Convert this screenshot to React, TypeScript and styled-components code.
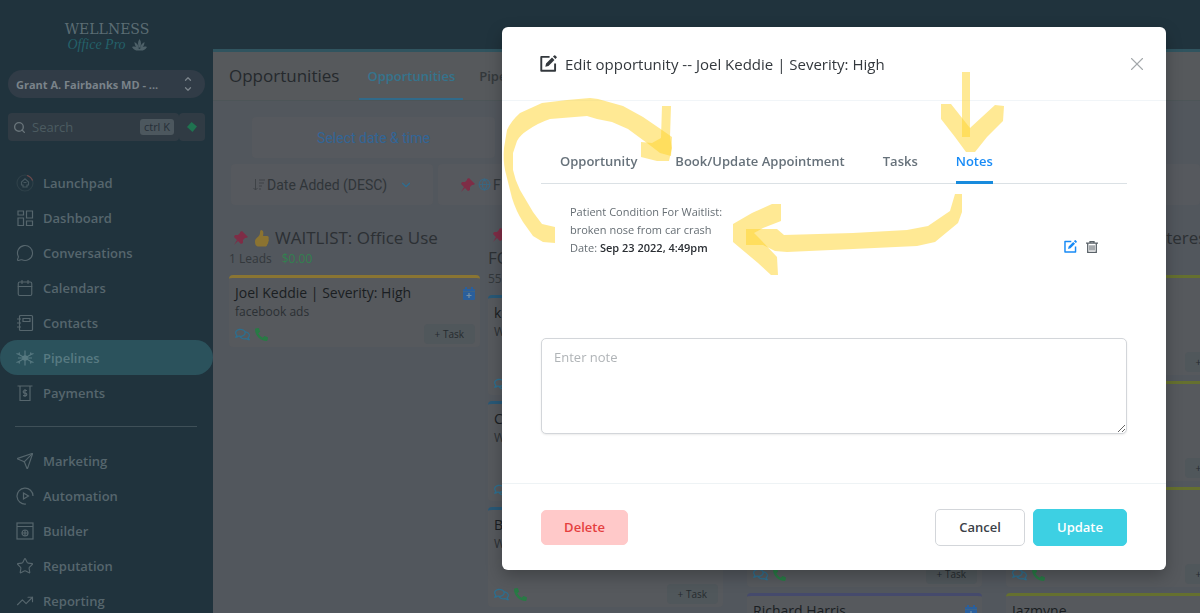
import React from 'react';
import styled, { createGlobalStyle } from 'styled-components';
import { MessageCircle, Send, Star, TrendingUp, Calendar, X, ChevronDown, ChevronUp, Search, Globe } from 'lucide-react';
import { FaPhoneAlt, FaRegComments } from 'react-icons/fa';

const sans = "'Open Sans', 'Noto Sans', sans-serif";

const Global = createGlobalStyle`
  * { box-sizing: border-box; }
  body { margin: 0; font-family: ${sans}; background: #20333d; overflow: hidden; }
  button, input, textarea { font-family: inherit; }
  h1, h2, h3, p, ul { margin: 0; padding: 0; }
  a { text-decoration: none; color: inherit; }
`;

const Shell = styled.div`
  display: flex;
  height: 100vh;
  overflow: hidden;
`;

/* ---------- sidebar ---------- */

const Sidebar = styled.aside`
  flex: none;
  width: 213px;
  display: flex;
  flex-direction: column;
  color: #56666d;
  background: #20333d;
  & > * { flex: none; }
`;

const Logo = styled.div`
  height: 70px;
  padding: 21px 0 0 1px;
  display: flex;
  flex-direction: column;
  align-items: center;
`;

const LogoName = styled.span`
  font: 14px/16px 'DejaVu Serif', serif;
  color: #5c6d74;
`;

const LogoScript = styled.span`
  display: flex;
  align-items: center;
  gap: 6px;
  font: italic 14px/16px 'Liberation Serif', serif;
  color: #24616a;
`;

const Account = styled.button`
  display: flex;
  align-items: center;
  justify-content: space-between;
  height: 28px;
  margin: 0 8px;
  padding: 0 12px 0 8px;
  border: 0;
  border-radius: 14px;
  background: #313c47;
  color: #7a838a;
  font-size: 11px;
  font-weight: 700;
`;

const Chevrons = styled.span`
  display: flex;
  flex-direction: column;
`;

const SearchRow = styled.div`
  display: flex;
  height: 28px;
  margin: 15px 8px 24px;
`;

const SearchBox = styled.label`
  flex: 1;
  min-width: 0;
  display: flex;
  align-items: center;
  gap: 6px;
  padding: 0 5px;
  border-radius: 4px;
  background: #303b44;
  color: #69747a;
`;

const SearchInput = styled.input`
  flex: 1;
  min-width: 0;
  padding: 0;
  border: 0;
  background: none;
  font-size: 13px;
  color: #69747a;
  &::placeholder { color: #4c5b61; opacity: 1; }
`;

const Kbd = styled.kbd`
  padding: 0 4px;
  border-radius: 3px;
  background: #4c575e;
  color: #262f38;
  font: 500 11px/16px ${sans};
`;

const Quick = styled.button`
  width: 26px;
  padding: 0;
  border: 0;
  border-radius: 4px;
  background: #303b44;
  display: grid;
  place-items: center;
`;

const NavList = styled.nav`
  display: flex;
  flex-direction: column;
`;

const NavItem = styled.a<{ $active?: boolean }>`
  display: flex;
  align-items: center;
  gap: 9px;
  height: 35px;
  flex: none;
  padding-left: 16px;
  border-radius: 18px;
  font-size: 13px;
  font-weight: 600;
  background: ${(p) => (p.$active ? '#2b525c' : 'transparent')};
  color: ${(p) => (p.$active ? '#587a82' : '#56666d')};
`;

const Divider = styled.hr`
  width: 182px;
  height: 1px;
  margin: 16px 15px;
  border: 0;
  background: #3f5058;
`;

/* ---------- main area behind the dialog ---------- */

const Main = styled.main`
  flex: 1;
  min-width: 0;
  margin-top: 49px;
  border-top: 3px solid #30545f;
  background: #52575d;
  overflow: hidden;
`;

const TopBar = styled.header`
  display: flex;
  align-items: center;
  gap: 20px;
  height: 49px;
  padding-left: 16px;
  border-bottom: 1px solid #4d5558;
  background: #56595c;
`;

const PageTitle = styled.h1`
  font-size: 17px;
  line-height: 24px;
  font-weight: 500;
  color: #25292d;
`;

const TopTabs = styled.nav`
  display: flex;
  gap: 8px;
  height: 48px;
`;

const TopTab = styled.a<{ $active?: boolean }>`
  display: flex;
  align-items: center;
  padding: 2px 8px 0;
  font-size: 13px;
  font-weight: 600;
  border-bottom: 2px solid ${(p) => (p.$active ? '#306a8a' : 'transparent')};
  color: ${(p) => (p.$active ? '#35748d' : '#33383b')};
`;

const Filters = styled.div`
  display: flex;
  flex-direction: column;
  gap: 6px;
  padding: 16px 0 13px 18px;
`;

const DateButton = styled.button`
  width: 243px;
  height: 41px;
  margin-left: 21px;
  border: 0;
  border-radius: 4px;
  background: #56595e;
  color: #326596;
  font: 14px/20px Roboto, sans-serif;
`;

const FilterRow = styled.div`
  display: flex;
  gap: 5px;
`;

const FilterButton = styled.button<{ $grow?: boolean }>`
  display: flex;
  align-items: center;
  flex: ${(p) => (p.$grow ? '1 0 auto' : '0 0 202px')};
  height: 41px;
  padding: 0 0 0 22px;
  border: 0;
  border-radius: 4px;
  background: #56595e;
  color: #303539;
  font: 14px/20px Roboto, sans-serif;
  white-space: nowrap;
  & > svg:last-child { margin-left: 12px; }
`;

const FilterText = styled.span`
  display: flex;
  margin-left: 2px;
`;

const Board = styled.div`
  display: flex;
  padding-left: 16px;
`;

const Column = styled.section<{ $full?: boolean }>`
  flex: 0 0 259px;
  padding: 9px ${(p) => (p.$full ? 8 : 24)}px 0 0;
`;

const ColumnTitle = styled.h2`
  display: flex;
  align-items: center;
  flex-wrap: wrap;
  column-gap: 5px;
  min-height: 21px;
  padding-left: 4px;
  font-size: 17px;
  line-height: 21px;
  font-weight: 400;
  color: #2c3034;
  white-space: nowrap;
`;

const TitleBreak = styled.span`
  flex-basis: 100%;
  padding-top: 4px;
  margin-left: -4px;
`;

const Counts = styled.p`
  display: flex;
  gap: 10px;
  min-height: 22px;
  padding: 1px 0;
  font-size: 12px;
  line-height: 20px;
  color: #33383c;
`;

const Money = styled.span`
  color: #32804f;
`;

const Cards = styled.div`
  display: flex;
  flex-direction: column;
  gap: 6px;
  padding-top: 5px;
`;

const CardBox = styled.article<{ $line: string; $short?: boolean }>`
  display: flex;
  flex-direction: column;
  height: ${(p) => (p.$short ? 72 : 100)}px;
  padding: 5px 5px 3px 6px;
  border-top: 3px solid ${(p) => p.$line};
  border-radius: 4px;
  background: #56595d;
`;

const CardHead = styled.div`
  display: flex;
  justify-content: space-between;
  align-items: center;
`;

const CardName = styled.h3`
  font-size: 14px;
  line-height: 20px;
  font-weight: 500;
  color: #1a1e22;
`;

const CardSource = styled.p`
  font-size: 12px;
  line-height: 18px;
  color: #2b3034;
`;

const CardFoot = styled.div`
  display: flex;
  align-items: center;
  gap: 5px;
  margin-top: auto;
  color: #2d6f8f;
`;

const TaskButton = styled.button`
  margin-left: auto;
  padding: 0 11px;
  border: 0;
  border-radius: 4px;
  background: #50575b;
  color: #262b2f;
  font-size: 10px;
  line-height: 20px;
  font-weight: 500;
  white-space: nowrap;
`;

/* ---------- dialog ---------- */

const Overlay = styled.div`
  position: fixed;
  inset: 0;
  display: flex;
  justify-content: flex-end;
  align-items: flex-start;
  padding: 27px 34px;
`;

const Dialog = styled.div`
  position: relative;
  width: 100%;
  max-width: 664px;
  border-radius: 6px;
  background: #fff;
  box-shadow: 0 6px 16px rgba(0, 0, 0, 0.25);
`;

const DialogHead = styled.div`
  display: flex;
  align-items: center;
  gap: 8px;
  height: 74px;
  padding: 0 18px 0 38px;
  border-bottom: 1px solid #f1f5f8;
  color: #33383d;
`;

const DialogTitle = styled.h2`
  flex: 1;
  font-size: 15px;
  line-height: 24px;
  font-weight: 400;
`;

const IconButton = styled.button<{ $tone: string }>`
  display: grid;
  place-items: center;
  padding: 0;
  border: 0;
  background: none;
  color: ${(p) => p.$tone};
`;

const DialogBody = styled.div`
  padding: 38px 39px 49px;
`;

const Tabs = styled.div`
  display: flex;
  gap: 38px;
  padding-left: 19px;
  border-bottom: 1px solid #dbe1e5;
`;

const Tab = styled.button<{ $active?: boolean }>`
  height: 45px;
  margin-bottom: -1px;
  padding: 2px 0 0;
  border: 0;
  border-bottom: 3px solid ${(p) => (p.$active ? '#188bdd' : 'transparent')};
  background: none;
  color: ${(p) => (p.$active ? '#188bf6' : '#66717a')};
  font-size: 13px;
  font-weight: 600;
  white-space: nowrap;
`;

const NoteRow = styled.div`
  display: flex;
  justify-content: space-between;
  align-items: flex-end;
  padding: 19px 29px 0;
  min-height: 73px;
`;

const NoteText = styled.p`
  font-size: 11px;
  line-height: 18px;
  color: #666e74;
  strong { font-weight: 600; color: #2a2e33; }
`;

const NoteActions = styled.div`
  display: flex;
  gap: 9px;
  padding-bottom: 4px;
`;

const NoteInput = styled.textarea`
  display: block;
  width: 100%;
  height: 96px;
  margin-top: 81px;
  padding: 8px 12px;
  border: 1px solid #d3d6da;
  border-radius: 5px;
  box-shadow: 0 1px 2px rgba(0, 0, 0, 0.08);
  font-size: 13px;
  line-height: 20px;
  color: #33383d;
  outline: 0;
  &::placeholder { color: #b0b4b7; opacity: 1; }
`;

const DialogFoot = styled.div`
  display: flex;
  align-items: center;
  gap: 8px;
  height: 87px;
  padding: 0 39px;
  border-top: 1px solid #eef3f5;
`;

const tones = {
  danger: ['#ffc9c9', '#e53e3e', '#ffc9c9'],
  plain: ['#fff', '#3b4147', '#d3d6da'],
  primary: ['#3dd0e3', '#fff', '#3dd0e3'],
} as const;

const Action = styled.button<{ $tone: keyof typeof tones }>`
  height: ${(p) => (p.$tone === 'danger' ? 35 : 37)}px;
  min-width: ${(p) => (p.$tone === 'danger' ? 87 : p.$tone === 'plain' ? 90 : 94)}px;
  margin-right: ${(p) => (p.$tone === 'danger' ? 'auto' : '0')};
  border: 1px solid ${(p) => tones[p.$tone][2]};
  border-radius: 5px;
  background: ${(p) => tones[p.$tone][0]};
  color: ${(p) => tones[p.$tone][1]};
  font-size: 13px;
  font-weight: 600;
`;

const Marker = styled.svg`
  position: absolute;
  left: 0;
  top: 0;
  pointer-events: none;
  fill: #ffd42a;
  fill-opacity: 0.5;
`;

/* ---------- drawings ---------- */

const line = { fill: 'none', stroke: 'currentColor', strokeWidth: 1.2 };

const navIcons: Record<string, React.ReactNode> = {
  Launchpad: (
    <>
      <circle cx="9" cy="9" r="8" opacity="0.25" />
      <path d="M11 1.500a8 8 0 0 1 5.500 5" stroke="#71494b" />
      <path d="M7 13v-2H5.500V8L9 4.800 12.500 8v3H11v2zM7.500 8.500h3" opacity="0.7" />
    </>
  ),
  Dashboard: (
    <path d="M2 2h5.500v4H2zM2 9h5.500v7.500H2zM10.500 2h6v7h-6zM10.500 12h6v4.500h-6z" />
  ),
  Contacts: (
    <>
      <rect x="3.500" y="1.500" width="13" height="15" rx="1" />
      <path d="M1 5h4M1 9h4M1 13h4M7 4.500h7v3h-7z" />
    </>
  ),
  Pipelines: (
    <>
      <path d="M9 9L3 5.500M9 9l6-3.500M9 9l-6 3.500M9 9l6 3.500M9 1.500v15M2 9h14" />
      <circle cx="9" cy="9" r="2.200" fill="currentColor" />
      <path d="M.5 4.500l2.500 1 .5-2M17.500 4.500l-2.500 1-.5-2M.5 13.500l2.500-1 .5 2M17.500 13.500l-2.500-1-.5 2" />
    </>
  ),
  Payments: (
    <>
      <path d="M1.500 2h15M4 2v14.500h10V2" />
      <path d="M11 6.500H8.500a1.200 1.200 0 0 0 0 2.600h1a1.200 1.200 0 0 1 0 2.600H7M9 5v8" />
    </>
  ),
  Automation: (
    <>
      <path d="M17 9A8 8 0 1 0 10 17" />
      <path d="M7.500 6l5 3-5 3z" />
    </>
  ),
  Builder: (
    <>
      <rect x="1" y="1" width="16" height="16" />
      <path d="M1 4.500h16M6 11h6M9 8v6" />
      <circle cx="9" cy="11" r="3" />
    </>
  ),
};

const lucideNav: Record<string, React.ElementType> = {
  Conversations: MessageCircle,
  Calendars: Calendar,
  Marketing: Send,
  Reputation: Star,
  Reporting: TrendingUp,
};

function NavIcon({ name }: { name: string }) {
  const Lucide = lucideNav[name];
  if (Lucide) return <Lucide size={18} strokeWidth={1.5} />;
  return <svg width="18" height="18" viewBox="0 0 18 18" {...line}>{navIcons[name]}</svg>;
}

const Pin = () => (
  <svg width="16" height="16" viewBox="0 0 16 16">
    <path d="M9 1l6 6-2 1-1 0-2 2 0 3-2 1-3-3-4 4 3-5-3-3 1-2 3 0 2-2 0-1z" fill="#7e2d46" />
  </svg>
);

const Thumb = () => (
  <svg width="16" height="18" viewBox="0 0 16 18">
    <path d="M7 1c3 0 2.500 4 2 6h4c2 0 2 2 1.500 3 .5 1 .5 2-.3 3 .2 1-.3 2-1 2.500 0 1.500-1 2-2.200 2H5c-3 0-4-2-4-5s3-4 4.500-6.500C6.500 4 5.500 2 7 1z" fill="#8b7331" />
  </svg>
);

const AddDate = () => (
  <svg width="12" height="13" viewBox="0 0 12 13">
    <path d="M1 2h1V0h2v2h4V0h2v2h1a1 1 0 0 1 1 1v9a1 1 0 0 1-1 1H1a1 1 0 0 1-1-1V3a1 1 0 0 1 1-1z" fill="#2a5f9c" />
    <path d="M0 4.500h12" stroke="#3d6488" />
    <path d="M6 6v5M3.500 8.500h5" stroke="#7690a3" strokeWidth="1.200" />
  </svg>
);

const EditIcon = ({ size }: { size: number }) => (
  <svg width={size} height={size} viewBox="0 0 16 16">
    <path d="M9 1.800H1.200V14.800H14.200V8" fill="none" stroke="currentColor" strokeWidth="1.800" strokeLinejoin="round" />
    <path d="M5 11l.7-3L11.300 2.400l2.300 2.300L8 10.300zM12.200 1.500L13.300.4a.8.8 0 0 1 1.100 0l1.200 1.200a.8.8 0 0 1 0 1.100L14.500 3.800z" fill="currentColor" />
  </svg>
);

const TrashIcon = () => (
  <svg width="12" height="12" viewBox="0 0 12 12" fill="none" stroke="currentColor">
    <path d="M0 2.200h12M4 2V.7h4V2M1.700 2.500v8.800h8.600V2.500" strokeWidth="1.300" />
    <path d="M4 4.300v5.200M6 4.300v5.200M8 4.300v5.200" strokeWidth="1.100" />
  </svg>
);

const SortIcon = () => (
  <svg width="12" height="12" viewBox="0 0 12 12" fill="none" stroke="currentColor" opacity="0.6">
    <path d="M2.500 0v11M0.500 9l2 2 2-2M6 1h6M6 4h5M6 7h3M6 10h2" />
  </svg>
);

const Lotus = () => (
  <svg width="15" height="12" viewBox="0 0 15 12" fill="#4d6068">
    <path d="M7.500 0c2 3 2 6 0 9-2-3-2-6 0-9zM2.500 3c2 1 4 3 4.500 6-3 0-4.500-3-4.500-6zM12.500 3c-2 1-4 3-4.500 6 3 0 4.500-3 4.500-6zM0 8c3-1 5 0 7.500 2 2.500-2 4.500-3 7.500-2-2 3-4 4-7.500 3.500C4 12 2 11 0 8z" />
  </svg>
);

/* ---------- pieces ---------- */

type CardData = { id: number; name?: string; source?: string; task?: boolean };

function Card({ name, source, task, color, short }: Omit<CardData, 'id'> & { color: string; short?: boolean }) {
  return (
    <CardBox $line={color} $short={short}>
      {name && <CardHead><CardName>{name}</CardName><AddDate /></CardHead>}
      {source && <CardSource>{source}</CardSource>}
      <CardFoot>
        <FaRegComments size={15} />
        <FaPhoneAlt size={13} color="#287a45" />
        {task && <TaskButton type="button">+ Task</TaskButton>}
      </CardFoot>
    </CardBox>
  );
}

type ColumnData = { color: string; title?: React.ReactNode; leads?: string; cards: CardData[] };

const columns: ColumnData[] = [
  {
    color: '#285876',
    title: <><Pin /><TitleBreak>FO</TitleBreak></>,
    leads: '55',
    cards: [
      { id: 1, name: 'k', source: 'W' },
      { id: 2, name: 'C', source: 'W' },
      { id: 3, name: 'B', source: 'W', task: true },
      { id: 4 },
    ],
  },
  {
    color: '#454a6c',
    cards: [{ id: 1 }, { id: 2 }, { id: 3, task: true }, { id: 4, name: 'Richard Harris' }],
  },
  {
    color: '#65702f',
    title: <><Pin />Laser Consults Interest</>,
    cards: [{ id: 1, task: true }, { id: 2, task: true }, { id: 3, task: true }, { id: 4, name: 'Jazmyne' }],
  },
];

export default function App() {
  return (
    <>
      <Global />
      <Shell>
        <Sidebar>
          <Logo>
            <LogoName>WELLNESS</LogoName>
            <LogoScript>Office Pro <Lotus /></LogoScript>
          </Logo>
          <Account type="button">
            Grant A. Fairbanks MD - ...
            <Chevrons><ChevronUp size={10} strokeWidth={3} /><ChevronDown size={10} strokeWidth={3} /></Chevrons>
          </Account>
          <SearchRow>
            <SearchBox>
              <Search size={13} strokeWidth={2.5} />
              <SearchInput placeholder="Search" aria-label="Search" />
              <Kbd>ctrl K</Kbd>
            </SearchBox>
            <Quick type="button" aria-label="Quick actions">
              <svg width="10" height="10" viewBox="0 0 10 10"><path d="M4.500 0L10 4.500 5.500 10 0 5z" fill="#1f7350" /></svg>
            </Quick>
          </SearchRow>
          <NavList>
            {['Launchpad', 'Dashboard', 'Conversations', 'Calendars', 'Contacts', 'Pipelines', 'Payments'].map((n) => (
              <NavItem key={n} href="#" $active={n === 'Pipelines'}><NavIcon name={n} />{n}</NavItem>
            ))}
          </NavList>
          <Divider />
          <NavList>
            {['Marketing', 'Automation', 'Builder', 'Reputation', 'Reporting'].map((n) => (
              <NavItem key={n} href="#"><NavIcon name={n} />{n}</NavItem>
            ))}
          </NavList>
        </Sidebar>

        <Main>
          <TopBar>
            <PageTitle>Opportunities</PageTitle>
            <TopTabs>
              <TopTab href="#" $active>Opportunities</TopTab>
              <TopTab href="#">Pipe</TopTab>
            </TopTabs>
          </TopBar>
          <Filters>
            <DateButton type="button">Select date &amp; time</DateButton>
            <FilterRow>
              <FilterButton type="button"><SortIcon /><FilterText>Date Added (DESC)</FilterText><ChevronDown size={14} color="#2e6d90" /></FilterButton>
              <FilterButton type="button" $grow><Pin /><FilterText><Globe size={13} color="#3a6680" /></FilterText><FilterText>F</FilterText></FilterButton>
            </FilterRow>
          </Filters>
          <Board>
            <Column $full>
              <ColumnTitle><Pin /><Thumb />WAITLIST: Office Use</ColumnTitle>
              <Counts>1 Leads <Money>$0.00</Money></Counts>
              <Cards><Card short task name="Joel Keddie | Severity: High" source="facebook ads" color="#8a7533" /></Cards>
            </Column>
            {columns.map((c) => (
              <Column key={c.color}>
                <ColumnTitle>{c.title}</ColumnTitle>
                <Counts>{c.leads}</Counts>
                <Cards>{c.cards.map(({ id, ...card }) => <Card key={id} {...card} color={c.color} />)}</Cards>
              </Column>
            ))}
          </Board>
        </Main>
      </Shell>

      <Overlay>
        <Dialog role="dialog" aria-labelledby="dialog-title">
          <DialogHead>
            <EditIcon size={17} />
            <DialogTitle id="dialog-title">Edit opportunity -- Joel Keddie | Severity: High</DialogTitle>
            <IconButton type="button" aria-label="Close" $tone="#a4a8ab"><X size={22} strokeWidth={1.2} /></IconButton>
          </DialogHead>
          <DialogBody>
            <Tabs role="tablist">
              {['Opportunity', 'Book/Update Appointment', 'Tasks', 'Notes'].map((t) => (
                <Tab key={t} type="button" role="tab" aria-selected={t === 'Notes'} $active={t === 'Notes'}>{t}</Tab>
              ))}
            </Tabs>
            <NoteRow>
              <NoteText>
                Patient Condition For Waitlist:<br />broken nose from car crash<br />Date: <strong>Sep 23 2022, 4:49pm</strong>
              </NoteText>
              <NoteActions>
                <IconButton type="button" aria-label="Edit note" $tone="#188bf6"><EditIcon size={13} /></IconButton>
                <IconButton type="button" aria-label="Delete note" $tone="#5b6369"><TrashIcon /></IconButton>
              </NoteActions>
            </NoteRow>
            <NoteInput placeholder="Enter note" aria-label="Note" />
          </DialogBody>
          <DialogFoot>
            <Action type="button" $tone="danger">Delete</Action>
            <Action type="button" $tone="plain">Cancel</Action>
            <Action type="button" $tone="primary">Update</Action>
          </DialogFoot>
          <Marker width="664" height="543" viewBox="502 27 664 543" aria-hidden="true">
            <path d="M555 243L543 242 533 236 523 222Q516 211 512 198L505 170Q503 160 504 148L507 130Q511 121 520 113L542 103 567 100 590 98 598 99 623 106 643 117 662 130 672 137 671 156 660 153 647 143 628 129 612 122 597 119 587 116 550 119Q538 123 528 130 520 135 517 141L513 153V170Q515 180 520 190L533 212 542 224 555 227Z" />
            <path d="M662 106H671L670 137 672 148 669 161H657L641 157V142L652 143 661 138Z" />
            <path d="M962 72H970V137H962Z" />
            <path d="M941 104H951L970 128 995 105 1004 106 1003 121 987 137 975 152H966L955 137 941 119Z" />
            <path d="M955 194H962V212L958 223 935 242 917 246 853 249 787 252 775 251 763 245H746V229H777L784 235 853 233 907 230 928 226 950 211Z" />
            <path d="M781 204V221L763 228 754 233 760 239 777 257 778 275H771L758 263 733 242V224L752 213 772 204Z" />
          </Marker>
        </Dialog>
      </Overlay>
    </>
  );
}
